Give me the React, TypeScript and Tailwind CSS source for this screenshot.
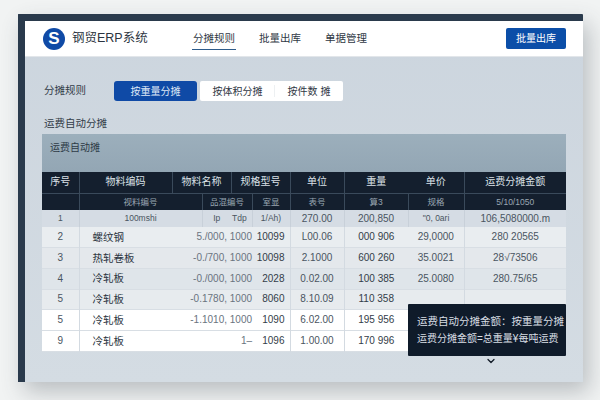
import { ChevronDown } from 'lucide-react';

const widths = [37, 93, 30, 29, 21, 38, 54, 64, 56, 102];

const rows = [
  { no: '2', name: '螺纹钢', spec: '5./000, 1000', code: '10099', unit: 'L00.06', weight: '000 906', price: '29,0000', fee: '280 20565', bg: 'bg-[#e9edf0]' },
  { no: '3', name: '热轧卷板', spec: '-0./700, 1000', code: '10098', unit: '2.1000', weight: '600 260', price: '35.0021', fee: '28√73506', bg: 'bg-[#e4e8ec]' },
  { no: '4', name: '冷轧板', spec: '-0./000, 1000', code: '2028', unit: '0.02.00', weight: '100 385', price: '25.0080', fee: '280.75/65', bg: 'bg-[#dfe5ea]' },
  { no: '5', name: '冷轧板', spec: '-0.1780, 1000', code: '8060', unit: '8.10.09', weight: '110 358', price: '', fee: '', bg: 'bg-[#e7ebee]' },
  { no: '5', name: '冷轧板', spec: '-1.1010, 1000', code: '1090', unit: '6.02.00', weight: '195 956', price: '', fee: '', bg: 'bg-white' },
  { no: '9', name: '冷轧板', spec: '1–', code: '1096', unit: '1.00.00', weight: '170 996', price: '', fee: '', bg: 'bg-white' },
];

export default function App() {
  return (
    <div className="w-[600px] h-[400px] overflow-hidden bg-[#f1f3f3] pt-[14px] pl-[18px] pr-[17px] font-['Liberation_Sans','Noto_Sans_CJK_SC',sans-serif]">
      <div className="h-[368px] flex flex-col border-l-[7px] border-t-[7px] border-[#2a3a4c] rounded-t-[1px] bg-gradient-to-b from-[#ccd5de] to-[#d4dce3] shadow-[6px_10px_22px_rgba(60,70,80,0.3)]">
        <header className="h-[36px] shrink-0 bg-white flex items-center pl-[18px] pr-[17px] border-b border-[#e2e6ea]">
          <div className="w-[22px] h-[22px] rounded-full bg-[#0f4aa6] text-white flex items-center justify-center text-[17px] font-bold">S</div>
          <div className="ml-[7px] w-[121px] text-[12.5px] text-[#2b3440]">钢贸ERP系统</div>
          <nav className="flex gap-[24px] text-[10.5px] text-[#2f3844]">
            <span className="relative">
              分摊规则
              <span className="absolute -left-[1px] -right-[1px] -bottom-[4px] h-[1.5px] bg-[#2d5b8a]" />
            </span>
            <span>批量出库</span>
            <span>单据管理</span>
          </nav>
          <button className="ml-auto w-[60px] h-[21px] rounded-[2px] bg-[#0b4ea8] text-white text-[10px]">批量出库</button>
        </header>

        <main className="flex-1 px-[17px] pt-[24px]">
          <div className="flex items-center h-[20px]">
            <span className="ml-[2px] w-[70px] text-[10.5px] text-[#323c48]">分摊规则</span>
            <span className="w-[83px] h-[20px] rounded-[3px] bg-[#0f4aa6] text-[#dfe8f6] text-[10px] flex items-center justify-center">按重量分摊</span>
            <div className="ml-[3px] w-[143px] h-[20px] rounded-[2px] bg-white flex items-center text-[10px] text-[#2f3844]">
              <span className="w-[74px] text-center pl-[1px]">按体积分摊</span>
              <span className="w-[1px] h-[12px] bg-[#edf0f2]" />
              <span className="flex-1 text-center">按件数 摊</span>
            </div>
          </div>

          <h2 className="ml-[2px] mt-[15px] h-[18px] text-[10.5px] leading-[14px] font-normal text-[#323c48]">运费自动分摊</h2>

          <div className="relative">
            <div className="h-[38px] pl-[8px] pt-[6px] text-[10px] text-[#2d3a46] bg-gradient-to-b from-[#9cafbc] to-[#93a6b4]">运费自动摊</div>
            <table className="table-fixed w-[524px] border-collapse text-center whitespace-nowrap leading-none">
              <colgroup>
                {widths.map((w, i) => (
                  <col key={i} style={{ width: w }} />
                ))}
              </colgroup>
              <thead className="bg-[#141f2e] text-[#dbe1e7] text-[10px] font-normal">
                <tr className="h-[21px] [&>th]:font-normal">
                  <th className="border-r border-[#3a4a5b]">序号</th>
                  <th className="border-r border-[#3a4a5b]">物料编码</th>
                  <th colSpan={2} className="border-r border-[#3a4a5b]">物料名称</th>
                  <th colSpan={2} className="border-r border-[#3a4a5b]">规格型号</th>
                  <th className="border-r border-[#3a4a5b]">单位</th>
                  <th>重量</th>
                  <th className="border-r border-[#3a4a5b]">单价</th>
                  <th>运费分摊金额</th>
                </tr>
                <tr className="h-[17px] text-[8.5px] text-[#9aa6b2] border-t border-[#3a4a5b] [&>th]:font-normal">
                  <th className="border-r border-[#3a4a5b]" />
                  <th colSpan={2} className="border-r border-[#3a4a5b]">视料编号</th>
                  <th colSpan={2} className="border-r border-[#3a4a5b]">品混编号</th>
                  <th className="border-r border-[#3a4a5b]">室显</th>
                  <th className="border-r border-[#3a4a5b]">表号</th>
                  <th className="border-r border-[#3a4a5b]">算3</th>
                  <th className="border-r border-[#3a4a5b]">规格</th>
                  <th>5/10/1050</th>
                </tr>
              </thead>
              <tbody className="text-[10px] text-[#4a5561]">
                <tr className="h-[17px] bg-[#d5dce4] text-[8.5px]">
                  <td className="border-r border-[#c8d0d9]">1</td>
                  <td colSpan={2} className="border-r border-[#c8d0d9]">100mshi</td>
                  <td colSpan={2} className="border-r border-[#c8d0d9] pl-[6px]">Ip &nbsp;&nbsp;&nbsp;&nbsp;Tdp</td>
                  <td className="border-r border-[#c8d0d9]">1/Ah)</td>
                  <td className="border-r border-[#c8d0d9] text-[10px]">270.00</td>
                  <td className="border-r border-[#c8d0d9] text-[10px]">200,850</td>
                  <td className="border-r border-[#c8d0d9]">"0, 0ari</td>
                  <td className="text-[10px]">106,5080000.m</td>
                </tr>
                {rows.map((r, i) => (
                  <tr key={i} className={`h-[20.7px] border-b border-[#d8dee4] ${r.bg}`}>
                    <td className="border-r border-[#d3dae1]">{r.no}</td>
                    <td className="text-left pl-[13px] text-[10.5px] text-[#2b3440]">{r.name}</td>
                    <td colSpan={3} className="text-right text-[#6a7480]">{r.spec}</td>
                    <td className="border-r border-[#d3dae1] text-right pr-[5px] text-[#333d49]">{r.code}</td>
                    <td className="border-r border-[#d3dae1]">{r.unit}</td>
                    <td className="text-[#333d49]">{r.weight}</td>
                    <td className="border-r border-[#d3dae1]">{r.price}</td>
                    <td>{r.fee}</td>
                  </tr>
                ))}
              </tbody>
            </table>

            <div className="absolute left-[366px] top-[170px] w-[158px] h-[52px] rounded-[1px] bg-[#0f1b2a] text-[#d8dee4] text-[10.5px] leading-[18px] pl-[9px] pt-[8px] whitespace-nowrap">
              <div>运费自动分摊金额：按重量分摊</div>
              <div className="text-[10px]">运费分摊金额=总重量¥每吨运费</div>
              <ChevronDown className="absolute left-[77px] top-[51px] w-[12px] h-[12px] text-[#111a26]" strokeWidth={2.5} />
            </div>
          </div>
        </main>
      </div>
    </div>
  );
}
